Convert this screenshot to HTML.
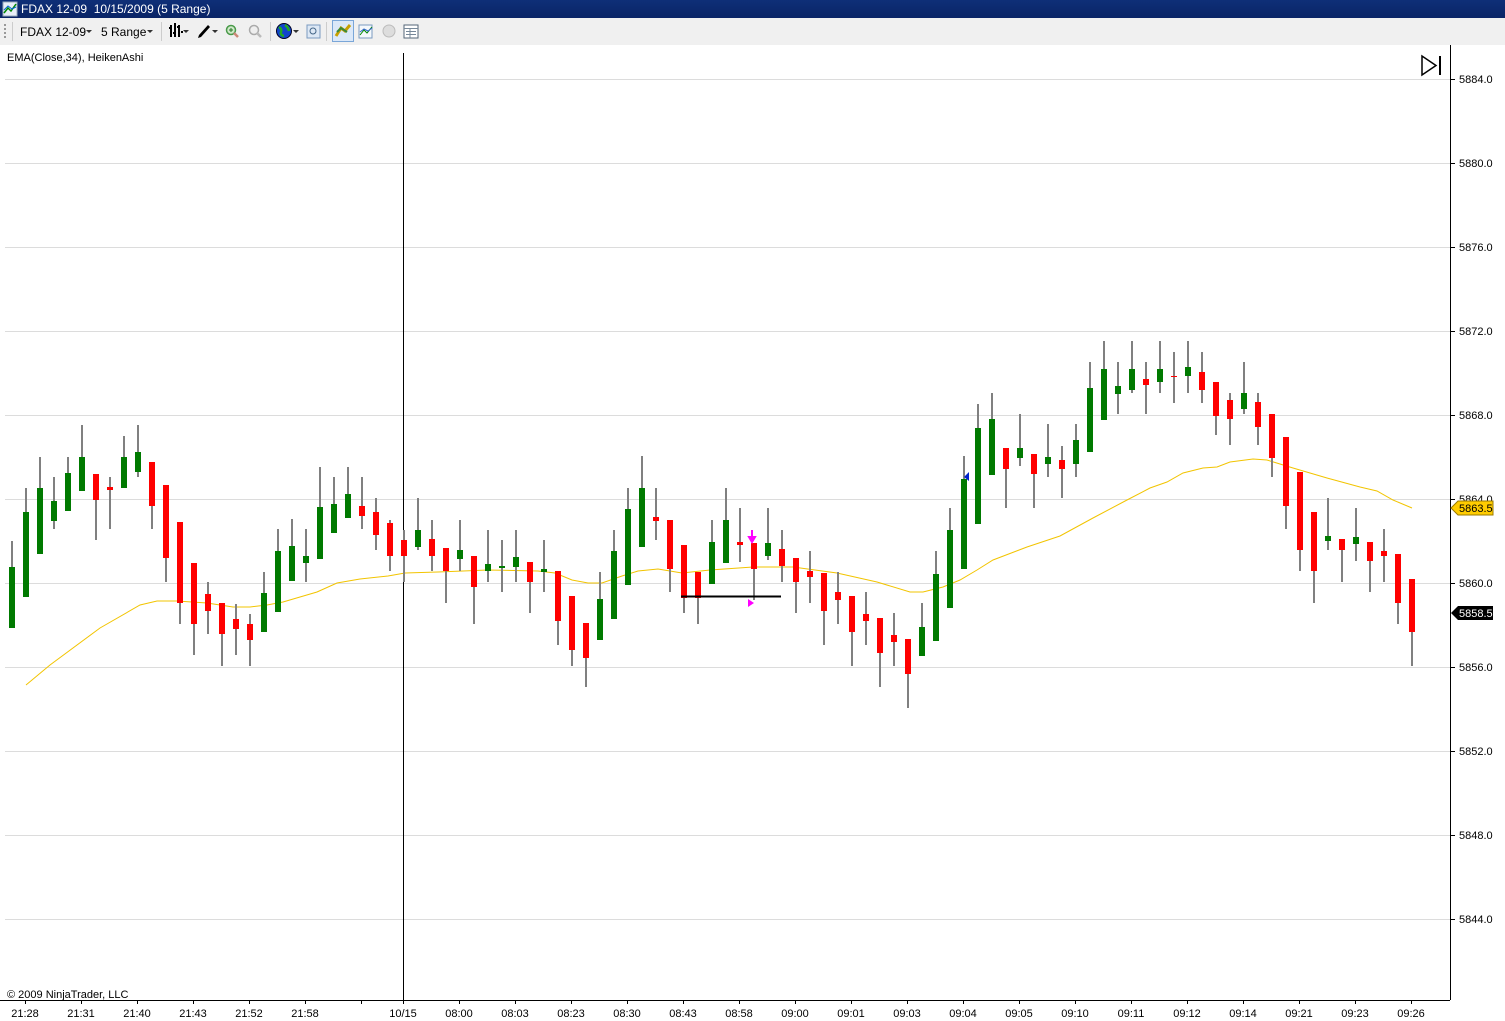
<!DOCTYPE html>
<html><head><meta charset="utf-8"><style>
html,body{margin:0;padding:0;width:1505px;height:1021px;overflow:hidden;background:#fff;font-family:"Liberation Sans",sans-serif;}
#title{position:absolute;left:0;top:0;width:1505px;height:18px;background:linear-gradient(#0e2f78,#0a2466);color:#fff;font-size:12px;line-height:18px;}
#title span{position:absolute;left:21px;top:0;}
#tb{position:absolute;left:0;top:18px;width:1505px;height:27px;background:#f0f0f0;font-size:12px;color:#000;}
.t{position:absolute;top:7px;}
svg{position:absolute;left:0;top:0;}
</style></head><body>
<div id="title"><svg width="16" height="16" style="left:2px;top:1px"><rect x="1" y="1" width="14" height="14" fill="#e8eef8" stroke="#9ab"/><path d="M2 12L6 7 9 10 14 3" stroke="#080" stroke-width="1.5" fill="none"/><path d="M2 9L6 5 10 8 14 6" stroke="#06c" fill="none"/></svg><span>FDAX 12-09&nbsp; 10/15/2009 (5 Range)</span></div>
<div id="tb">
<svg width="430" height="27">
<g fill="#999"><rect x="4" y="6" width="2" height="2"/><rect x="4" y="10" width="2" height="2"/><rect x="4" y="14" width="2" height="2"/><rect x="4" y="18" width="2" height="2"/></g>
<line x1="12.5" y1="4" x2="12.5" y2="23" stroke="#ccc"/>
<path d="M86 12l3 3 3-3z M147 12l3 3 3-3z M183 12l3 3 3-3z M212 12l3 3 3-3z M293 12l3 3 3-3z" fill="#333"/>
<line x1="161.5" y1="4" x2="161.5" y2="23" stroke="#ccc"/>
<path d="M171 7v12M175 5v14M179 7v12M169 10h2M173 15h2M177 9h2M181 14h2" stroke="#000" stroke-width="2"/>
<path d="M198 20l3-1 9-10-2-2-9 10z" fill="#000"/>
<circle cx="231" cy="12" r="4.5" fill="#cfe8c8" stroke="#4a9a4a" stroke-width="1.5"/><path d="M229 12h4M231 10v4" stroke="#2a7a2a"/><path d="M234 15l4 4" stroke="#c87" stroke-width="2.5"/>
<circle cx="254" cy="12" r="4.5" fill="#eee" stroke="#aaa" stroke-width="1.5"/><path d="M257 15l4 4" stroke="#bbb" stroke-width="2.5"/>
<line x1="270.5" y1="4" x2="270.5" y2="23" stroke="#ccc"/>
<circle cx="284" cy="13" r="7.5" fill="#1144cc" stroke="#002" /><path d="M279 9q3 2 2 5t3 4M285 7q3 2 4 6" stroke="#2a2" stroke-width="2.5" fill="none"/>
<rect x="307" y="7" width="13" height="13" fill="#dde8f5" stroke="#7a9ac0"/><circle cx="313" cy="13" r="3" fill="none" stroke="#468"/>
<line x1="326.5" y1="4" x2="326.5" y2="23" stroke="#ccc"/>
<rect x="332.5" y="2.5" width="21" height="21" fill="#dbe8f8" stroke="#7aa6d8"/>
<path d="M336 18l5-8 4 3 5-6" stroke="#c8a000" stroke-width="3" fill="none"/><path d="M337 14l4-4 6 4" stroke="#3a8a3a" stroke-width="2" fill="none"/>
<rect x="359" y="7" width="13" height="13" fill="#f4f8fc" stroke="#7a9ac0"/><path d="M360 17l4-5 3 3 5-6" stroke="#080" fill="none"/><path d="M360 14l4-3 4 2 4-3" stroke="#36c" fill="none"/>
<circle cx="389" cy="13" r="6" fill="#ddd" stroke="#bbb"/>
<rect x="404" y="7" width="14" height="13" fill="#fff" stroke="#567"/><path d="M404 10.5h14M406 13.5h10M406 16.5h10M410 10v10" stroke="#789"/>
</svg>
<span class="t" style="left:20px">FDAX 12-09</span>
<span class="t" style="left:101px">5 Range</span>
</div>

<svg width="1505" height="1021" style="top:0;left:0;pointer-events:none" viewBox="0 0 1505 1021">
<g stroke="#dcdcdc" stroke-width="1">
<path d="M5 79.5H1450M5 163.5H1450M5 247.5H1450M5 331.5H1450M5 415.5H1450M5 499.5H1450M5 583.5H1450M5 667.5H1450M5 751.5H1450M5 835.5H1450M5 919.5H1450"/>
</g>
<g stroke="#000" stroke-width="1">
<path d="M1450.5 45V1000M0 1000.5H1450M403.5 53V1000"/>
<path d="M1450 79.5h5M1450 163.5h5M1450 247.5h5M1450 331.5h5M1450 415.5h5M1450 499.5h5M1450 583.5h5M1450 667.5h5M1450 751.5h5M1450 835.5h5M1450 919.5h5"/>
<path d="M25.5 1000v4M81.5 1000v4M137.5 1000v4M193.5 1000v4M249.5 1000v4M305.5 1000v4M361.5 1000v4M403.5 1000v4M459.5 1000v4M515.5 1000v4M571.5 1000v4M627.5 1000v4M683.5 1000v4M739.5 1000v4M795.5 1000v4M851.5 1000v4M907.5 1000v4M963.5 1000v4M1019.5 1000v4M1075.5 1000v4M1131.5 1000v4M1187.5 1000v4M1243.5 1000v4M1299.5 1000v4M1355.5 1000v4M1411.5 1000v4"/>
</g>
<g font-size="11" fill="#000" font-family="Liberation Sans, sans-serif">
<text x="1459" y="83">5884.0</text><text x="1459" y="167">5880.0</text><text x="1459" y="251">5876.0</text><text x="1459" y="335">5872.0</text><text x="1459" y="419">5868.0</text><text x="1459" y="503">5864.0</text><text x="1459" y="587">5860.0</text><text x="1459" y="671">5856.0</text><text x="1459" y="755">5852.0</text><text x="1459" y="839">5848.0</text><text x="1459" y="923">5844.0</text>
<g text-anchor="middle"><text x="25" y="1017">21:28</text><text x="81" y="1017">21:31</text><text x="137" y="1017">21:40</text><text x="193" y="1017">21:43</text><text x="249" y="1017">21:52</text><text x="305" y="1017">21:58</text><text x="403" y="1017">10/15</text><text x="459" y="1017">08:00</text><text x="515" y="1017">08:03</text><text x="571" y="1017">08:23</text><text x="627" y="1017">08:30</text><text x="683" y="1017">08:43</text><text x="739" y="1017">08:58</text><text x="795" y="1017">09:00</text><text x="851" y="1017">09:01</text><text x="907" y="1017">09:03</text><text x="963" y="1017">09:04</text><text x="1019" y="1017">09:05</text><text x="1075" y="1017">09:10</text><text x="1131" y="1017">09:11</text><text x="1187" y="1017">09:12</text><text x="1243" y="1017">09:14</text><text x="1299" y="1017">09:21</text><text x="1355" y="1017">09:23</text><text x="1411" y="1017">09:26</text></g>
<text x="7" y="61">EMA(Close,34), HeikenAshi</text>
<text x="7" y="998">© 2009 NinjaTrader, LLC</text>
</g>
<path d="M1422 56v19l14-9.5z" fill="none" stroke="#000" stroke-width="1.5"/><path d="M1440 56v19" stroke="#000" stroke-width="2"/>

<path d="M26 685L50 665 100 628 140 605 157 601 177 601 207 603 233 607 250 607 267 605 283 602 317 592 337 583 360 579 388 576 405 573 438 572 488 570 538 571 555 573 572 580 588 583 602 583 622 576 638 571 658 569 682 573 710 570 753 567 793 567 837 573 877 582 910 592 923 592 943 587 960 580 977 570 993 560 1027 547 1060 536 1093 518 1127 500 1150 488 1167 482 1183 473 1203 468 1217 467 1230 462 1253 459 1267 460 1293 468 1327 478 1360 487 1377 491 1393 500 1412 508" fill="none" stroke="#f2c400" stroke-width="1"/>

<path stroke="#808080" stroke-width="2" fill="none" d="M12 541V628M26 488V597M40 457V554M54 477V529M68 457V511M82 425V491M96 474V540M110 477V529M124 436V488M138 425V477M152 462V529M166 485V582M180 522V624M194 563V655M208 582V634M222 603V666M236 604V655M250 614V666M264 572V632M278 529V612M292 519V581M306 529V582M320 467V559M334 477V533M348 467V518M362 477V529M376 498V550M390 520V571M404 530V582M418 498V550M432 520V571M446 548V603M460 520V571M474 556V624M488 530V582M502 540V592M516 530V582M530 562V613M544 540V592M558 571V645M572 596V666M586 623V687M600 572V640M614 530V619M628 488V585M642 456V547M656 488V540M670 520V592M684 545V613M698 572V624M712 520V584M726 488V563M740 508V562M754 543V600M768 508V560M782 530V582M796 558V613M810 551V603M824 573V645M838 572V624M852 596V666M866 592V645M880 618V687M894 613V666M908 639V708M922 603V656M936 551V641M950 508V608M964 456V569M978 404V524M992 393V475M1006 448V508M1020 414V466M1034 454V508M1048 424V477M1062 446V498M1076 424V477M1090 362V452M1104 341V420M1118 362V414M1132 341V393M1146 362V414M1160 341V393M1174 352V403M1188 341V393M1202 352V403M1216 382V435M1230 393V445M1244 362V414M1258 393V445M1272 414V477M1286 437V529M1300 472V571M1314 512V603M1328 498V550M1342 539V582M1356 508V561M1370 542V592M1384 529V582M1398 554V624M1412 579V666"/>

<g fill="#007a00">
<rect x="9" y="567" width="6" height="61"/><rect x="23" y="512" width="6" height="85"/><rect x="37" y="488" width="6" height="66"/><rect x="51" y="501" width="6" height="20"/><rect x="65" y="473" width="6" height="38"/><rect x="79" y="457" width="6" height="34"/><rect x="121" y="457" width="6" height="31"/><rect x="135" y="452" width="6" height="20"/><rect x="261" y="593" width="6" height="39"/><rect x="275" y="551" width="6" height="61"/><rect x="289" y="546" width="6" height="35"/><rect x="303" y="556" width="6" height="7"/><rect x="317" y="507" width="6" height="52"/><rect x="331" y="504" width="6" height="29"/><rect x="345" y="494" width="6" height="24"/><rect x="415" y="530" width="6" height="17"/><rect x="457" y="550" width="6" height="9"/><rect x="485" y="564" width="6" height="7"/><rect x="499" y="566" width="6" height="2"/><rect x="513" y="557" width="6" height="10"/><rect x="541" y="569" width="6" height="3"/><rect x="597" y="599" width="6" height="41"/><rect x="611" y="551" width="6" height="68"/><rect x="625" y="509" width="6" height="76"/><rect x="639" y="488" width="6" height="59"/><rect x="709" y="542" width="6" height="42"/><rect x="723" y="520" width="6" height="43"/><rect x="765" y="543" width="6" height="13"/><rect x="919" y="627" width="6" height="29"/><rect x="933" y="574" width="6" height="67"/><rect x="947" y="530" width="6" height="78"/><rect x="961" y="479" width="6" height="90"/><rect x="975" y="428" width="6" height="96"/><rect x="989" y="419" width="6" height="56"/><rect x="1017" y="448" width="6" height="10"/><rect x="1045" y="457" width="6" height="7"/><rect x="1073" y="440" width="6" height="24"/><rect x="1087" y="388" width="6" height="64"/><rect x="1101" y="369" width="6" height="51"/><rect x="1115" y="386" width="6" height="8"/><rect x="1129" y="369" width="6" height="21"/><rect x="1157" y="369" width="6" height="13"/><rect x="1185" y="367" width="6" height="9"/><rect x="1241" y="393" width="6" height="16"/><rect x="1325" y="536" width="6" height="5"/><rect x="1353" y="537" width="6" height="7"/>
</g>
<g fill="#ff0000">
<rect x="93" y="474" width="6" height="26"/><rect x="107" y="487" width="6" height="3"/><rect x="149" y="462" width="6" height="44"/><rect x="163" y="485" width="6" height="73"/><rect x="177" y="522" width="6" height="81"/><rect x="191" y="563" width="6" height="61"/><rect x="205" y="594" width="6" height="17"/><rect x="219" y="603" width="6" height="31"/><rect x="233" y="619" width="6" height="10"/><rect x="247" y="624" width="6" height="16"/><rect x="359" y="506" width="6" height="10"/><rect x="373" y="512" width="6" height="23"/><rect x="387" y="523" width="6" height="33"/><rect x="401" y="540" width="6" height="16"/><rect x="429" y="539" width="6" height="17"/><rect x="443" y="548" width="6" height="23"/><rect x="471" y="556" width="6" height="31"/><rect x="527" y="562" width="6" height="20"/><rect x="555" y="571" width="6" height="50"/><rect x="569" y="596" width="6" height="54"/><rect x="583" y="623" width="6" height="35"/><rect x="653" y="517" width="6" height="4"/><rect x="667" y="520" width="6" height="49"/><rect x="681" y="545" width="6" height="53"/><rect x="695" y="572" width="6" height="26"/><rect x="737" y="542" width="6" height="3"/><rect x="751" y="543" width="6" height="26"/><rect x="779" y="549" width="6" height="17"/><rect x="793" y="558" width="6" height="24"/><rect x="807" y="571" width="6" height="6"/><rect x="821" y="573" width="6" height="38"/><rect x="835" y="592" width="6" height="8"/><rect x="849" y="596" width="6" height="36"/><rect x="863" y="614" width="6" height="7"/><rect x="877" y="618" width="6" height="35"/><rect x="891" y="635" width="6" height="7"/><rect x="905" y="639" width="6" height="35"/><rect x="1003" y="448" width="6" height="21"/><rect x="1031" y="454" width="6" height="20"/><rect x="1059" y="460" width="6" height="9"/><rect x="1143" y="379" width="6" height="6"/><rect x="1171" y="376" width="6" height="1"/><rect x="1199" y="372" width="6" height="18"/><rect x="1213" y="382" width="6" height="34"/><rect x="1227" y="400" width="6" height="19"/><rect x="1255" y="402" width="6" height="25"/><rect x="1269" y="414" width="6" height="44"/><rect x="1283" y="437" width="6" height="69"/><rect x="1297" y="472" width="6" height="78"/><rect x="1311" y="512" width="6" height="59"/><rect x="1339" y="539" width="6" height="11"/><rect x="1367" y="542" width="6" height="19"/><rect x="1381" y="551" width="6" height="5"/><rect x="1395" y="554" width="6" height="49"/><rect x="1409" y="579" width="6" height="53"/>
</g>
<path d="M681 596.5H781" stroke="#000" stroke-width="2"/>
<path d="M752 530v10M749 537l3 5 3-5z" stroke="#ff00ff" stroke-width="2" fill="#ff00ff"/>
<path d="M748 599l6 4-6 4z" fill="#ff00ff"/>
<path d="M969 472l-5 5 5 4z" fill="#0022cc"/>
<path d="M1451 508l7-7h35v14h-35z" fill="#ffcc00" stroke="#9a7a00"/>
<text x="1459" y="512" font-size="11" font-family="Liberation Sans, sans-serif" fill="#000">5863.5</text>
<path d="M1451 613l7-7h35v14h-35z" fill="#000"/>
<text x="1459" y="617" font-size="11" font-family="Liberation Sans, sans-serif" fill="#fff">5858.5</text>
</svg>
</body></html>
